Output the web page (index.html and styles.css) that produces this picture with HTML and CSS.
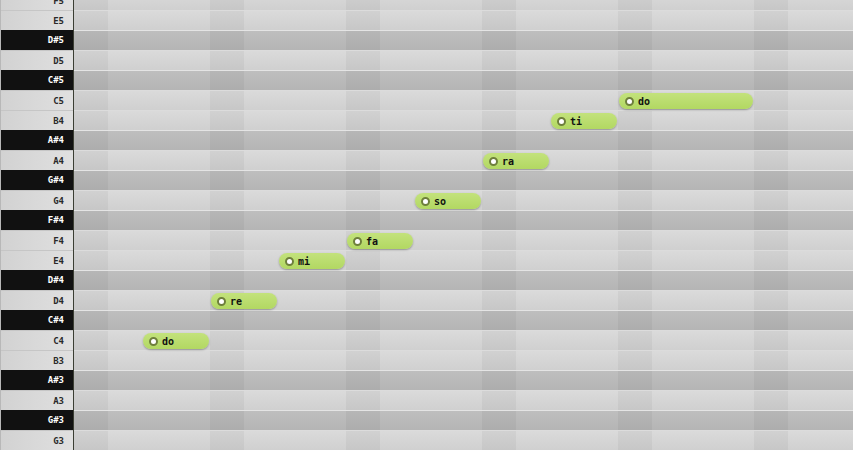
FILE: index.html
```html
<!DOCTYPE html>
<html lang="en">
<head>
  <meta charset="UTF-8" />
  <title>Piano Roll</title>
  <link rel="stylesheet" href="styles.css">
</head>
<body>
  <div class="piano-roll">
    <div class="keys">
      <div class="key white">F5</div>
      <div class="key white">E5</div>
      <div class="key black">D#5</div>
      <div class="key white">D5</div>
      <div class="key black">C#5</div>
      <div class="key white">C5</div>
      <div class="key white">B4</div>
      <div class="key black">A#4</div>
      <div class="key white">A4</div>
      <div class="key black">G#4</div>
      <div class="key white">G4</div>
      <div class="key black">F#4</div>
      <div class="key white">F4</div>
      <div class="key white">E4</div>
      <div class="key black">D#4</div>
      <div class="key white">D4</div>
      <div class="key black">C#4</div>
      <div class="key white">C4</div>
      <div class="key white">B3</div>
      <div class="key black">A#3</div>
      <div class="key white">A3</div>
      <div class="key black">G#3</div>
      <div class="key white">G3</div>
    </div>

    <div class="roll">
      <div class="lanes">
        <div class="lane white"></div>
        <div class="lane white"></div>
        <div class="lane black"></div>
        <div class="lane white"></div>
        <div class="lane black"></div>
        <div class="lane white"></div>
        <div class="lane white"></div>
        <div class="lane black"></div>
        <div class="lane white"></div>
        <div class="lane black"></div>
        <div class="lane white"></div>
        <div class="lane black"></div>
        <div class="lane white"></div>
        <div class="lane white"></div>
        <div class="lane black"></div>
        <div class="lane white"></div>
        <div class="lane black"></div>
        <div class="lane white"></div>
        <div class="lane white"></div>
        <div class="lane black"></div>
        <div class="lane white"></div>
        <div class="lane black"></div>
        <div class="lane white"></div>
      </div>

      <!-- notes: grid-row = pitch lane, grid-column = beat -->
      <div class="notes">
        <div class="note" style="grid-row: 18; grid-column: 3 / span 2;"><span class="dot"></span>do</div>
        <div class="note" style="grid-row: 16; grid-column: 5 / span 2;"><span class="dot"></span>re</div>
        <div class="note" style="grid-row: 14; grid-column: 7 / span 2;"><span class="dot"></span>mi</div>
        <div class="note" style="grid-row: 13; grid-column: 9 / span 2;"><span class="dot"></span>fa</div>
        <div class="note" style="grid-row: 11; grid-column: 11 / span 2;"><span class="dot"></span>so</div>
        <div class="note" style="grid-row: 9; grid-column: 13 / span 2;"><span class="dot"></span>ra</div>
        <div class="note" style="grid-row: 7; grid-column: 15 / span 2;"><span class="dot"></span>ti</div>
        <div class="note" style="grid-row: 6; grid-column: 17 / span 4;"><span class="dot"></span>do</div>
      </div>
    </div>
  </div>
</body>
</html>
```
FILE: styles.css
```css
body {
  margin: 0;
  background-color: #d3d3d3;
  overflow: hidden;
}

.piano-roll {
  display: flex;
  margin-top: -10px;
}

/* keyboard column */
.keys {
  width: 72px;
  border-left: 1px solid #b8b8b8;
  border-right: 1px solid #3b3e33;
  flex-shrink: 0;
}

.key {
  height: 20px;
  box-sizing: border-box;
  padding-right: 9px;
  text-align: right;
  line-height: 21px;
  font-family: 'DejaVu Sans Mono', monospace;
  font-size: 9px;
  font-weight: bold;
}

.key.white {
  background: linear-gradient(to right, #d2d2d2, #e0e0e0);
  color: #2a2a2a;
  border-top: 1px solid #c6c6c6;
  line-height: 20px;
}

.key.black {
  background-color: #111111;
  color: #ffffff;
}

/* lanes */
.roll {
  position: relative;
  flex: 1;
}

.lane {
  height: 20px;
  box-sizing: border-box;
  background:
    linear-gradient(to right, rgba(0, 0, 0, 0.045) 0 34px, transparent 34px) 0 0 / 136px 100% repeat-x,
    linear-gradient(#dadada, #d0d0d0);
  border-top: 1px solid #dcdcdc;
}

.lane.black {
  background:
    linear-gradient(to right, rgba(0, 0, 0, 0.045) 0 34px, transparent 34px) 0 0 / 136px 100% repeat-x,
    linear-gradient(#bebebe, #b5b5b5);
  border-top: 1px solid #e4e4e4;
}

/* notes sit over the lanes */
.notes {
  position: absolute;
  inset: 0;
  display: grid;
  grid-template-columns: repeat(23, 34px);
  grid-auto-rows: 20px;
}

.note {
  display: flex;
  align-items: center;
  gap: 4px;
  margin: 3px 1px 1px 1px;
  padding-left: 6px;
  border-radius: 8px;
  background: linear-gradient(#c3e27c, #b2d862);
  box-shadow: 0 1px 2px rgba(0, 0, 0, 0.3);
  font-family: 'DejaVu Sans Mono', monospace;
  font-size: 10px;
  font-weight: bold;
  color: #111111;
}

.dot {
  width: 5px;
  height: 5px;
  border-radius: 50%;
  background-color: #ffffff;
  border: 2px solid #6e7f3c;
}
```
